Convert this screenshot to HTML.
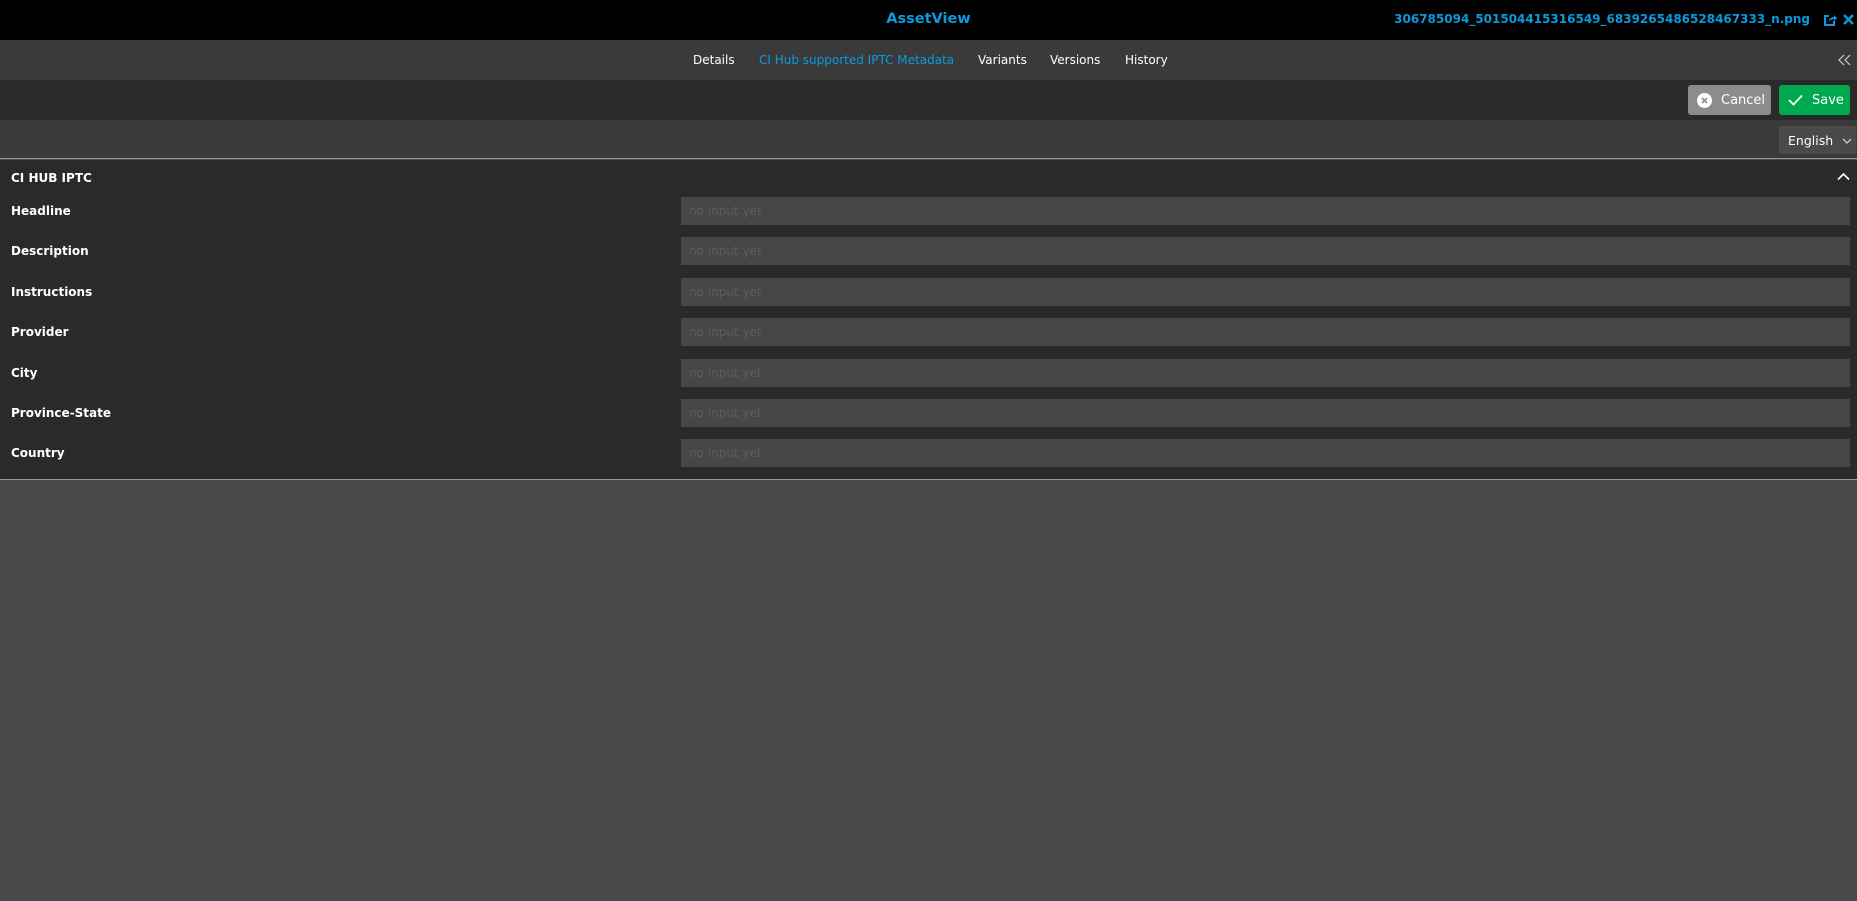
<!DOCTYPE html>
<html><head><meta charset="utf-8"><style>
*{box-sizing:border-box;margin:0;padding:0}
body{width:1857px;height:901px;background:#4a4a4a;font-family:"DejaVu Sans","Liberation Sans",sans-serif;overflow:hidden;position:relative}
.top{position:absolute;left:0;top:0;width:1857px;height:40px;background:#000}
.title{position:absolute;left:0;width:1857px;top:11px;text-align:center;color:#0b9ade;font-weight:bold;font-size:14.5px}
.fname{position:absolute;right:47px;top:12px;color:#0b9ade;font-weight:bold;font-size:12px}
.tabs{position:absolute;top:40px;left:0;width:1857px;height:40px;background:#3a3a3a}
.tab{position:absolute;top:13px;font-size:12px;color:#fff}
.act{position:absolute;top:80px;left:0;width:1857px;height:40px;background:#2a2a2a}
.btn{position:absolute;top:5px;height:30px;border-radius:3px;color:#fff;font-size:13px;line-height:30px}
.lang{position:absolute;top:120px;left:0;width:1857px;height:39px;background:#3a3a3a;border-bottom:1px solid #9a9a9a}
.sec{position:absolute;top:160px;left:0;width:1857px;height:320px;background:#2a2a2a;border-bottom:1px solid #9a9a9a}
.lbl{position:absolute;left:11px;color:#fff;font-weight:bold;font-size:12px}
.inp{position:absolute;left:681px;width:1169px;height:28px;background:#474747;color:#5c5c5c;font-size:12px;line-height:28px;padding-left:8px}
</style></head><body>
<div class="top">
<div class="title">AssetView</div>
<div class="fname">306785094_501504415316549_6839265486528467333_n.png</div>
<svg style="position:absolute;left:1823px;top:13px" width="14" height="14" viewBox="0 0 14 14"><path d="M6 3H2v9h9V8" fill="none" stroke="#0b9ade" stroke-width="2"/><path d="M6 9c0-4 3-5 5-5V2l3 3-3 3V6c-2 0-4 1-5 3z" fill="#0b9ade"/></svg>
<svg style="position:absolute;left:1842px;top:13px" width="13" height="13" viewBox="0 0 13 13"><path d="M2 2l9 9M11 2l-9 9" stroke="#0b9ade" stroke-width="2.4"/></svg>
</div>
<div class="tabs">
<div class="tab" style="left:693px">Details</div>
<div class="tab" style="left:759px;color:#0b9ade">CI Hub supported IPTC Metadata</div>
<div class="tab" style="left:978px">Variants</div>
<div class="tab" style="left:1050px">Versions</div>
<div class="tab" style="left:1125px">History</div>
<svg style="position:absolute;left:1838px;top:13px" width="14" height="14" viewBox="0 0 14 14"><path d="M6 2L1 7l5 5M12 2L7 7l5 5" fill="none" stroke="#ccc" stroke-width="1.2"/></svg>
</div>
<div class="act">
<div class="btn" style="left:1688px;width:83px;background:#8c8c8c">
<svg style="position:absolute;left:9px;top:8px" width="15" height="15" viewBox="0 0 15 15"><circle cx="7.5" cy="7.5" r="7.5" fill="#fff"/><path d="M5 5l5 5M10 5l-5 5" stroke="#8c8c8c" stroke-width="1.6"/></svg>
<span style="position:absolute;left:33px;top:1px">Cancel</span></div>
<div class="btn" style="left:1779px;width:71px;background:#00a94f">
<svg style="position:absolute;left:9px;top:9px" width="15" height="12" viewBox="0 0 15 12"><path d="M1 6l4.5 4.5L14 1.5" fill="none" stroke="#fff" stroke-width="1.8"/></svg>
<span style="position:absolute;left:33px;top:1px">Save</span></div>
</div>
<div class="lang">
<div style="position:absolute;left:1779px;top:6px;width:77px;height:28px;background:#4a4a4a;border-radius:2px;color:#fff;font-size:12.5px;line-height:30px;padding-left:9px">English
<svg style="position:absolute;left:63px;top:12px" width="10" height="7" viewBox="0 0 10 7"><path d="M1 1l4 4 4-4" fill="none" stroke="#ddd" stroke-width="1.2"/></svg></div>
</div>
<div class="sec">
<div class="lbl" style="top:11px">CI HUB IPTC</div>
<svg style="position:absolute;left:1837px;top:12px" width="13" height="9" viewBox="0 0 13 9"><path d="M1 7.5l5.5-5.5 5.5 5.5" fill="none" stroke="#fff" stroke-width="1.6"/></svg>
<div class="lbl" style="top:44px">Headline</div><div class="inp" style="top:37px">no input yet</div>
<div class="lbl" style="top:84px">Description</div><div class="inp" style="top:77px">no input yet</div>
<div class="lbl" style="top:125px">Instructions</div><div class="inp" style="top:118px">no input yet</div>
<div class="lbl" style="top:165px">Provider</div><div class="inp" style="top:158px">no input yet</div>
<div class="lbl" style="top:206px">City</div><div class="inp" style="top:199px">no input yet</div>
<div class="lbl" style="top:246px">Province-State</div><div class="inp" style="top:239px">no input yet</div>
<div class="lbl" style="top:286px">Country</div><div class="inp" style="top:279px">no input yet</div>
</div>
</body></html>
